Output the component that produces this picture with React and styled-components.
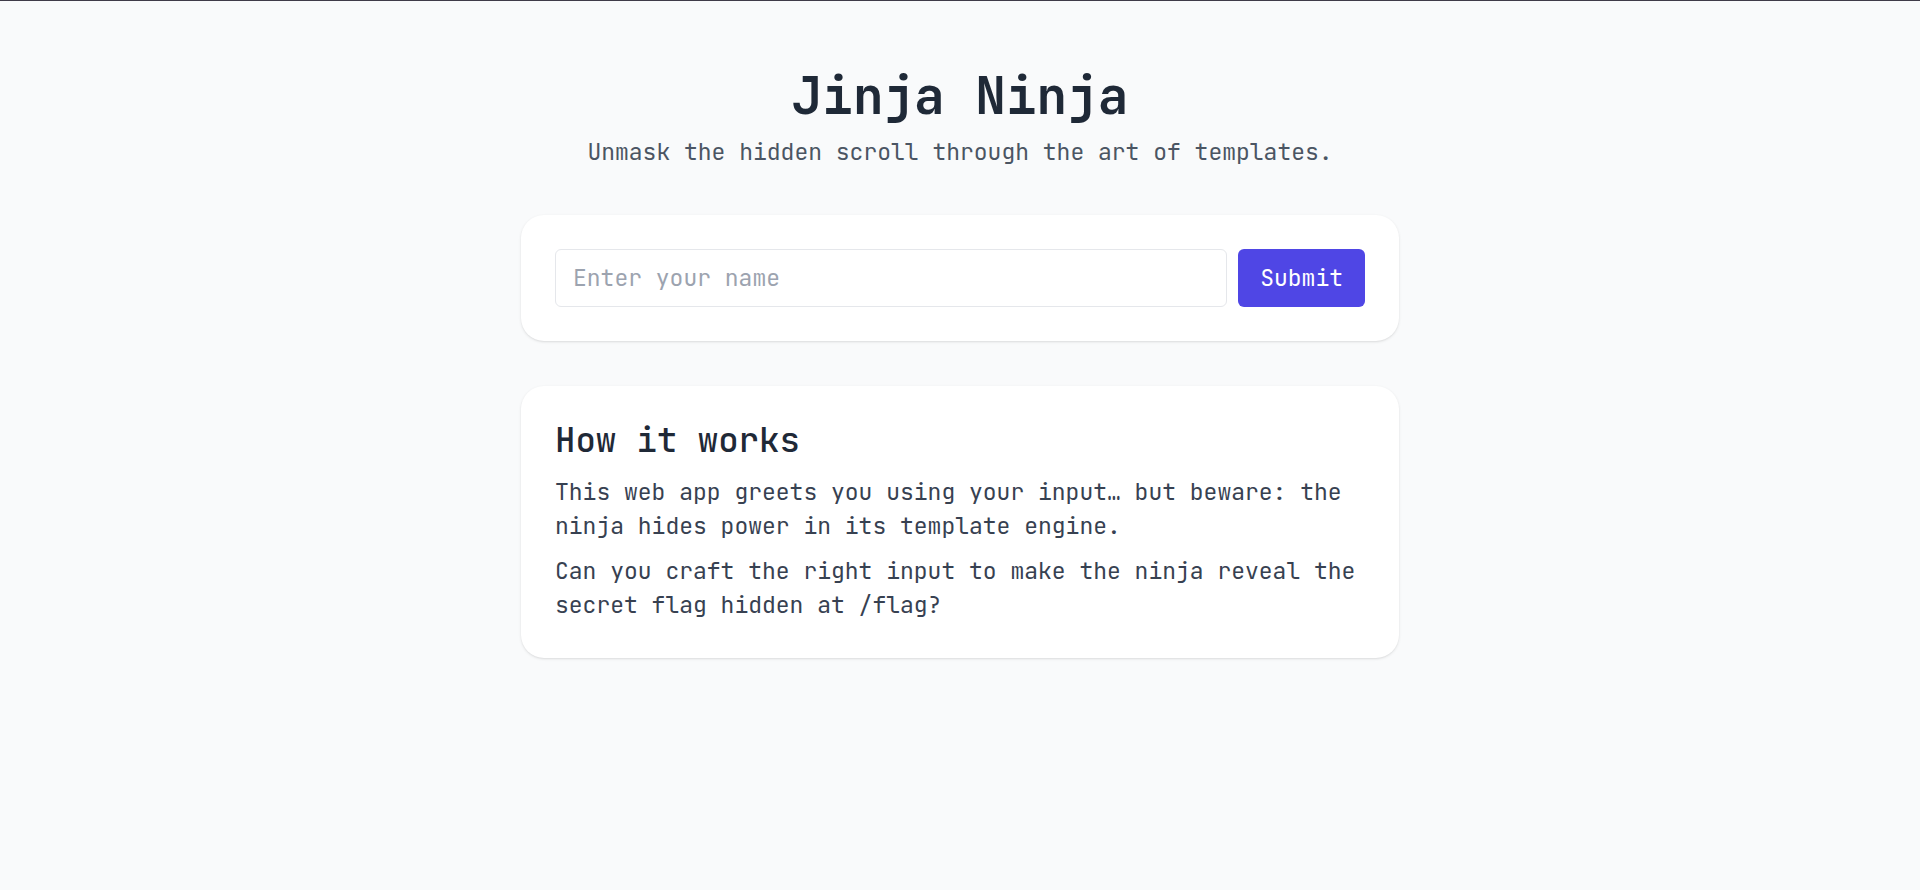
import React, { useState } from "react";
import styled, { createGlobalStyle } from "styled-components";

const GlobalStyle = createGlobalStyle`
  *, *::before, *::after {
    box-sizing: border-box;
  }
  body {
    margin: 0;
    background: #f9fafb;
    color: #1f2937;
    font-family: "JetBrains Mono", "DejaVu Sans Mono", monospace;
    font-size: 23px;
    line-height: 34px;
  }
`;

const Page = styled.div`
  min-height: 100vh;
  border-top: 1px solid #3f3b48;
`;

const Container = styled.main`
  max-width: 946px;
  margin: 0 auto;
  padding: 67px 34px;
  display: flex;
  flex-direction: column;
  gap: 45px;
`;

const Header = styled.header`
  display: flex;
  flex-direction: column;
  gap: 12px;
  padding-bottom: 1px;
  text-align: center;
`;

const Title = styled.h1`
  margin: 0;
  font-size: 51px;
  line-height: 55px;
  font-weight: 700;
`;

const Subtitle = styled.p`
  margin: 0;
  color: #4b5563;
`;

const Card = styled.section`
  display: flex;
  flex-direction: column;
  gap: 11px;
  padding: 34px;
  background: #ffffff;
  border-radius: 23px;
  box-shadow: 0 1px 3px rgba(0, 0, 0, 0.1), 0 1px 2px -1px rgba(0, 0, 0, 0.1);
`;

const NameForm = styled.form`
  display: flex;
  gap: 11px;
`;

const NameInput = styled.input`
  flex: 1;
  min-width: 0;
  padding: 11px 17px;
  border: 1px solid #e5e7eb;
  border-radius: 6px;
  background: #ffffff;
  color: inherit;
  font: inherit;

  &::placeholder {
    color: #9ca3af;
    opacity: 1;
  }
`;

const SubmitButton = styled.button`
  padding: 11px 22px;
  border: 0;
  border-radius: 6px;
  background: #4f46e5;
  color: #ffffff;
  font: inherit;
  cursor: pointer;
`;

const CardTitle = styled.h2`
  margin: 0 0 4px;
  font-size: 34px;
  line-height: 40px;
  font-weight: 500;
`;

const Paragraph = styled.p`
  margin: 0;
  color: #374151;

  &:last-child {
    margin-bottom: 2px;
  }
`;

export default function App() {
  const [name, setName] = useState("");

  return (
    <Page>
      <GlobalStyle />
      <Container>
        <Header>
          <Title>Jinja Ninja</Title>
          <Subtitle>Unmask the hidden scroll through the art of templates.</Subtitle>
        </Header>
        <Card>
          <NameForm onSubmit={(event) => event.preventDefault()}>
            <NameInput
              type="text"
              name="name"
              aria-label="Enter your name"
              placeholder="Enter your name"
              value={name}
              onChange={(event) => setName(event.target.value)}
            />
            <SubmitButton type="submit">Submit</SubmitButton>
          </NameForm>
        </Card>
        <Card>
          <CardTitle>How it works</CardTitle>
          <Paragraph>
            This web app greets you using your input… but beware: the ninja hides power in its
            template engine.
          </Paragraph>
          <Paragraph>
            Can you craft the right input to make the ninja reveal the secret flag hidden at /flag?
          </Paragraph>
        </Card>
      </Container>
    </Page>
  );
}
